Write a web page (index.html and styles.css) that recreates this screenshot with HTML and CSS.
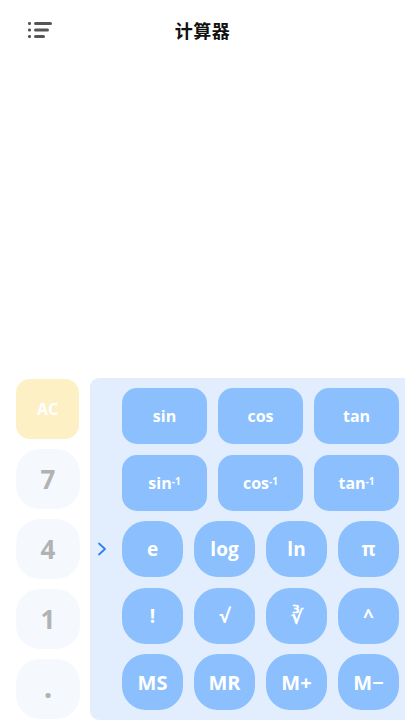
FILE: index.html
```html
<!DOCTYPE html>
<html lang="zh">
<head>
<meta charset="utf-8">
<title>计算器</title>
<link rel="stylesheet" href="styles.css">
</head>
<body>
<div class="app">
  <header class="header">
    <svg class="menu-icon" width="26" height="20" viewBox="0 0 26 20">
      <g fill="#555">
        <rect x="0" y="2" width="3" height="3" rx="1.2"/>
        <rect x="0" y="8.5" width="3" height="3" rx="1.2"/>
        <rect x="0" y="15" width="3" height="3" rx="1.2"/>
        <rect x="6" y="2" width="18" height="3" rx="1.5"/>
        <rect x="6" y="8.5" width="15" height="3" rx="1.5"/>
        <rect x="6" y="15" width="11" height="3" rx="1.5"/>
      </g>
    </svg>
    <h1 class="title">计算器</h1>
  </header>
  <div class="display"></div>
  <div class="keypad">
    <div class="left-col">
      <div class="key key-ac">AC</div>
      <div class="key key-num">7</div>
      <div class="key key-num">4</div>
      <div class="key key-num">1</div>
      <div class="key key-num key-dot">.</div>
    </div>
    <div class="panel">
      <div class="arrow">
        <svg width="10" height="14" viewBox="0 0 10 14"><path d="M2 1.5 L8 7 L2 12.5" fill="none" stroke="#2f80f0" stroke-width="1.8" stroke-linecap="round" stroke-linejoin="round"/></svg>
      </div>
      <div class="row row-3">
        <div class="fk fk-wide">sin</div>
        <div class="fk fk-wide">cos</div>
        <div class="fk fk-wide">tan</div>
      </div>
      <div class="row row-3">
        <div class="fk fk-wide">sin<sup>-1</sup></div>
        <div class="fk fk-wide">cos<sup>-1</sup></div>
        <div class="fk fk-wide">tan<sup>-1</sup></div>
      </div>
      <div class="row row-4 row-arrow">
        <div class="fk fk-round">e</div>
        <div class="fk fk-round">log</div>
        <div class="fk fk-round">ln</div>
        <div class="fk fk-round">π</div>
      </div>
      <div class="row row-4">
        <div class="fk fk-round">!</div>
        <div class="fk fk-round">√</div>
        <div class="fk fk-round">∛</div>
        <div class="fk fk-round">^</div>
      </div>
      <div class="row row-4">
        <div class="fk fk-round fk-big">MS</div>
        <div class="fk fk-round fk-big">MR</div>
        <div class="fk fk-round fk-big">M+</div>
        <div class="fk fk-round fk-big">M−</div>
      </div>
    </div>
  </div>
</div>
</body>
</html>
```
FILE: styles.css
```css
* { box-sizing: border-box; }
html, body {
  margin: 0;
  padding: 0;
  background: #ffffff;
}
body {
  font-family: "Open Sans", "Noto Sans", "Noto Sans CJK SC", sans-serif;
}
.app {
  width: 405px;
  height: 720px;
  display: flex;
  flex-direction: column;
  overflow: hidden;
}
.header {
  height: 64px;
  flex: none;
  display: flex;
  align-items: center;
  justify-content: center;
  padding-bottom: 4px;
  position: relative;
}
.menu-icon {
  position: absolute;
  left: 28px;
  top: 20px;
}
.title {
  margin: 0;
  font-family: "Noto Sans CJK SC", "Noto Sans", sans-serif;
  font-size: 18px;
  font-weight: 700;
  color: #111;
  letter-spacing: 0.5px;
}
.display {
  flex: 1;
}
.keypad {
  flex: none;
  height: 342px;
  display: flex;
  align-items: stretch;
}
.left-col {
  width: 90px;
  flex: none;
  padding: 1px 0 0 16px;
  display: flex;
  flex-direction: column;
  gap: 10px;
}
.key {
  width: 64px;
  height: 60px;
  flex: none;
  display: flex;
  align-items: center;
  justify-content: center;
  font-weight: 700;
}
.key-ac {
  width: 63px;
  background: #fef0c5;
  color: #ffffff;
  border-radius: 14px;
  font-size: 16px;
}
.key-num {
  background: #f5f9fe;
  color: #b2b2b2;
  border-radius: 24px;
  font-size: 26px;
}
.key-dot {
  font-size: 30px;
  padding-bottom: 6px;
}
.panel {
  flex: 1;
  background: #e2eefd;
  border-radius: 9px 0 0 9px;
  display: grid;
  grid-template-columns: 32px 1fr;
  grid-template-rows: repeat(5, 56px);
  row-gap: 10.5px;
  padding: 10px 6px 9px 0;
}
.arrow {
  grid-column: 1;
  grid-row: 3;
  display: flex;
  align-items: center;
  padding-left: 7px;
}
.row {
  grid-column: 2;
  display: flex;
  gap: 11px;
}
.row-arrow { grid-row: 3; }
.fk {
  background: #8bbffd;
  color: #ffffff;
  display: flex;
  align-items: center;
  justify-content: center;
  font-weight: 700;
  font-size: 16px;
  height: 56px;
}
.fk-wide {
  width: 85px;
  border-radius: 15px;
}
.fk-round {
  width: 61px;
  border-radius: 24px;
  font-size: 19px;
}
.fk-big {
  font-size: 20px;
}
.fk sup {
  font-size: 10px;
  line-height: 0;
  position: relative;
  top: -2px;
  vertical-align: super;
}
```
